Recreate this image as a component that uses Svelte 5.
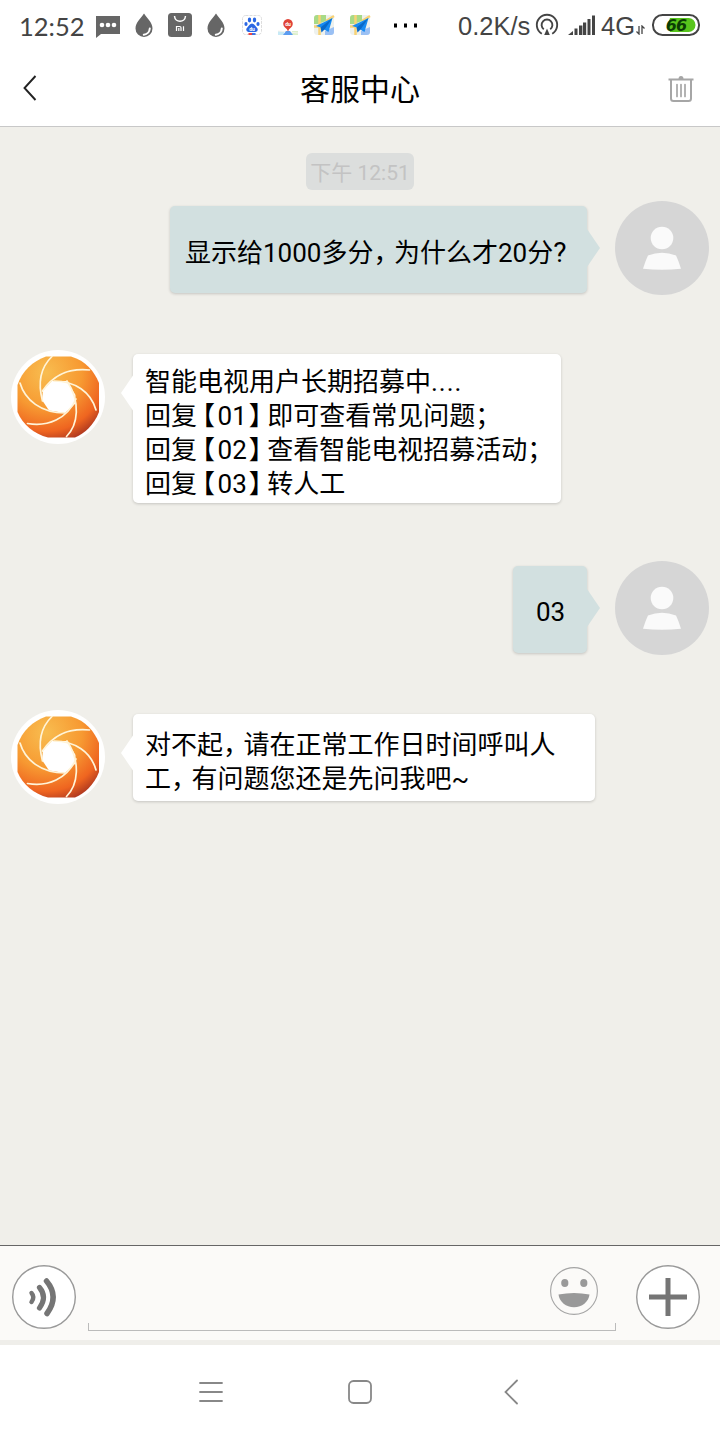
<script>
  const messages = [
    { from: 'me', kind: 'question', lines: ['显示给1000多分，为什么才20分?'] },
    {
      from: 'agent',
      kind: 'menu',
      lines: ['智能电视用户长期招募中....', '回复【01】即可查看常见问题；', '回复【02】查看智能电视招募活动；', '回复【03】转人工']
    },
    { from: 'me', kind: 'short', lines: ['03'] },
    { from: 'agent', kind: 'reply', lines: ['对不起，请在正常工作日时间呼叫人', '工，有问题您还是先问我吧~'] }
  ];
  const marks = { '，': 'comma', '；': 'semi', '【': 'open', '】': 'close', '?': 'ask', '....': 'dots' };
  const parts = (line) => line.split(/([，；【】?]|\.{4})/).filter(Boolean);
</script>

<div class="screen">
  <div class="status">
    <span class="clock">12:52</span>
    <div class="notices">
      <svg viewBox="0 0 36 36"><path d="M6 9h24v18H11l-5 4z" fill="#666" /><g fill="#fff"><circle cx="12" cy="18" r="2.3" /><circle cx="18" cy="18" r="2.3" /><circle cx="24" cy="18" r="2.3" /></g></svg>
      {@render drop()}
      <svg viewBox="0 0 36 36"><rect x="6" y="6" width="24" height="24" rx="3.5" fill="#666" /><path d="M12.5 9c.5 7 10.500 7 11 0" fill="none" stroke="#fff" stroke-width="1.500" /><path d="M14.500 24v-4.500h3.200q1.300 0 1.300 1.300V24M16.800 21v3M21.500 19.200V24" fill="none" stroke="#fff" stroke-width="1.200" /></svg>
      {@render drop()}
      <svg viewBox="0 0 36 36"><rect x="8.500" y="8.500" width="19" height="19" rx="3" fill="#fff" stroke="#ddd" stroke-dasharray="3 1" /><g fill="#2b67e4"><ellipse cx="15.500" cy="13" rx="1.700" ry="2.400" /><ellipse cx="20.500" cy="13" rx="1.700" ry="2.400" /><ellipse cx="12" cy="17" rx="1.600" ry="2" /><ellipse cx="24" cy="17" rx="1.600" ry="2" /><path d="M18 16.500q2 0 3.500 2.500l2 2.500q1 3-2 3.500h-7q-3-.500-2-3.500l2-2.500q1.500-2.500 3.500-2.500z" /></g><text x="18" y="23.800" class="mini">du</text><path d="M14.500 27h4" stroke="#e33" stroke-width="1.800" /><path d="M18 27h3.500" stroke="#2b67e4" stroke-width="1.800" /></svg>
      <svg viewBox="0 0 36 36"><path d="M8 24h6v4H8z" fill="#c7e9f6" /><path d="M22 24h6v4h-6z" fill="#dcf0cb" /><path d="M8 24l20 2" stroke="#f4f4ee" /><path d="M13 28l3-4h4l3 4z" fill="#5c9df0" /><path d="M18 24.500q-.600-2.500-3-4a4.800 4.800 0 1 1 6 0q-2.400 1.500-3 4z" fill="#e04337" /><text x="18" y="18.500" class="mini">du</text></svg>
      {@render mapIcon()}
      {@render mapIcon()}
    </div>
    <svg class="more" viewBox="0 0 28 36"><path d="M2 17.500h3v4H2zM12 17.500h3v4h-3zM22 17.500h3v4h-3z" fill="#000" /></svg>
    <span class="speed">0.2K/s</span>
    <svg class="hotspot" viewBox="0 0 24 24"><g fill="none" stroke="#444" stroke-width="1.900"><path d="M6.800 20.700a10.200 10.200 0 1 1 10.400 0" /><path d="M8.800 16.300a5.400 5.400 0 1 1 6.400 0" /></g><path d="M12 15.500l2.800 6.500H9.200z" fill="#444" /></svg>
    <svg class="signal" viewBox="0 0 28 20"><path d="M0 20l5-4v4zM6.500 13.500h3V20h-3zM11 10.500h3.400V20H11zM15 7.500h3.200V20H15zM19.500 4h3v16h-3zM24 .500h3V20h-3z" fill="#444" /></svg>
    <span class="net">4G</span>
    <svg class="arrows" viewBox="0 0 9 10"><path d="M3 1v8L.500 6.500M6 9V1l2.500 2.500" fill="none" stroke="#444" stroke-width="1.300" /></svg>
    <svg class="battery" viewBox="0 0 48 22"><rect x="1" y="1" width="46" height="20" rx="9.500" fill="#fff" stroke="#444" stroke-width="2" /><path d="M18 4h18.500a7 7 0 0 1 0 14H18q-3-7 0-14z" fill="#58c41c" /><text x="24" y="17.200" class="level">66</text></svg>
  </div>

  <header>
    <svg class="back" viewBox="0 0 14 26"><path d="M12.500 1L1.500 13l11 12" fill="none" stroke="#222" stroke-width="1.900" /></svg>
    <h1>客服中心</h1>
    <svg class="trash" viewBox="0 0 26 28"><g fill="none" stroke="#a6a6a6" stroke-width="2"><path d="M.500 4.500h25M3 5v18.500q0 2.500 2.500 2.500h15q2.500 0 2.500-2.500V5" /><path d="M9 9.500v12M13 9.500v12M17 9.500v12" stroke-linecap="round" stroke-width="1.700" /></g><path d="M10.500 4q0-3 2.500-3t2.500 3z" fill="#a6a6a6" /></svg>
  </header>

  <main>
    <time>下午 12:51</time>
    {#each messages as m}
      <div class="row {m.from} {m.kind}">
        {#if m.from === 'agent'}
          <svg class="avatar" viewBox="0 0 94 94">
            <defs>
              <radialGradient id="glow" cx=".35" cy=".2" r=".88"><stop offset="0" stop-color="#f8bd50" /><stop offset=".5" stop-color="#f79a32" /><stop offset=".82" stop-color="#ef6520" /><stop offset="1" stop-color="#ae3820" /></radialGradient>
            </defs>
            <circle cx="47" cy="47" r="47" fill="#fff" />
            <path d="M35 6.500h25C75 11 83 21 88 33v29C83 75 74 83 64 87.500H37C23 84 12 75 6.500 62V35C11 21 22 11 35 6.500z" fill="url(#glow)" />
            <path d="M41 31L56 31L64.500 45L64 54L54 63L38 60.500L31 50L32 40z" fill="#fff" />
            <g fill="none" stroke="#fff4d8" stroke-width="1.700" stroke-linecap="round">
              <path d="M41 6.500C29 18 27 34 31.500 51" />
              <path d="M78.500 20C58 18 43 24 31.500 41" />
              <path d="M85 60C80 42 64 31 43 31" />
              <path d="M55.500 86.500C67 75 70 52 56 31" />
              <path d="M16.500 73.500C37 77 56 69 65 49" />
              <path d="M9 33C14 50 30 63 54 63" />
            </g>
          </svg>
        {/if}
        <div class="bubble">
          {#each m.lines as line}
            <p>{#each parts(line) as part}{#if marks[part]}<span class="mark {marks[part]}">{part}</span>{:else}{part}{/if}{/each}</p>
          {/each}
          <svg class="tail" viewBox="0 0 13 38"><path d="M0 0L13 19L0 38z" /></svg>
        </div>
        {#if m.from === 'me'}
          <svg class="avatar" viewBox="0 0 94 94"><circle cx="47" cy="47" r="47" fill="#d6d6d6" /><circle cx="47" cy="37" r="11.300" fill="#fafafa" /><path d="M33 54.500q14-5.500 28 0q2.500 5 5 13.200q-19 2.200-38 0q2.500-8.200 5-13.200z" fill="#fafafa" /></svg>
        {/if}
      </div>
    {/each}
  </main>

  <footer>
    <svg class="round" viewBox="0 0 64 64"><circle cx="32" cy="32" r="31.300" fill="#fff" stroke="#999" stroke-width="1.400" /><g fill="none" stroke="#757575" stroke-linecap="round"><path d="M19.500 28q3.600 4 0 9" stroke-width="4.400" /><path d="M27.500 22.500q8 9.500 0 20.500" stroke-width="5.200" /><path d="M34.500 16q13 15.500 .500 32.500" stroke-width="5.500" /></g></svg>
    <div class="field">
      <svg class="smile" viewBox="0 0 48 48"><circle cx="24" cy="24" r="23.400" fill="none" stroke="#a5a5a5" stroke-width="1.100" /><g fill="#999"><ellipse cx="14.800" cy="16" rx="3.600" ry="4" /><ellipse cx="33.800" cy="16" rx="3.600" ry="4" /><path d="M8.500 27.500q15.500-3 31 0c-1 7.500-7.500 12.700-15.500 12.700S9.500 35 8.500 27.500z" /></g></svg>
    </div>
    <svg class="round" viewBox="0 0 64 64"><circle cx="32" cy="32" r="31.300" fill="#fff" stroke="#999" stroke-width="1.400" /><path d="M32 15.500v33M15.500 32h33" stroke="#757575" stroke-width="5" stroke-linecap="square" /></svg>
  </footer>
  <nav>
    <svg viewBox="0 0 28 28"><path d="M3 5h22M3 14h22M3 23h22" /></svg>
    <svg viewBox="0 0 28 28"><rect x="3" y="3" width="22" height="22" rx="4.500" /></svg>
    <svg viewBox="0 0 28 28"><path d="M22 2.500L10.500 14l11.500 11.500" /></svg>
  </nav>
</div>

{#snippet drop()}
  <svg viewBox="0 0 36 36"><path d="M18 6.500c3 4.500 8.500 9 8.500 15a8.500 8.500 0 0 1-17 0c0-6 5.500-10.500 8.500-15z" fill="#666" /><path d="M23.800 21.500q-.500 5.500-6 6.200" fill="none" stroke="#fff" stroke-width="2" stroke-linecap="round" /></svg>
{/snippet}

{#snippet mapIcon()}
  <svg viewBox="0 0 36 36"><rect x="8" y="8" width="20" height="20" rx="3.500" fill="#eef1ed" /><path d="M11 8h9v6l-8 3H8v-6q0-3 3-3z" fill="#a8da86" /><path d="M19 24l9-4v5q0 3-3 3h-6z" fill="#9ac0f4" /><path d="M13.500 8v20M8 19.500h9M20 14l8-5" stroke="#f8d275" stroke-width="2.500" /><path d="M26.500 11L10 19l5 1.500L22.500 25z" fill="#168bf2" /><path d="M26.500 11L14.500 20.500l1 5 3-3z" fill="#0869c8" /></svg>
{/snippet}

<style>
  :global(body) { margin: 0; }
  .screen {
    width: 720px;
    height: 1440px;
    display: flex;
    flex-direction: column;
    overflow: hidden;
    background: #fff;
    font-family: Roboto, "Noto Sans CJK SC", sans-serif;
  }
  svg { display: block; flex: none; }
  .status {
    height: 50px;
    display: flex;
    align-items: center;
    box-sizing: border-box;
    padding-left: 19px;
    color: #444;
  }
  .clock { width: 71px; font: 25.500px/50px Lato, sans-serif; margin-top: 1px; white-space: nowrap; }
  .notices { display: flex; }
  .notices svg { width: 36px; height: 36px; }
  .mini { font: bold 5px Roboto, sans-serif; fill: #fff; text-anchor: middle; }
  .more { width: 28px; height: 36px; margin: -2px 0 0 14px; }
  .speed, .net { font: 25.500px/50px "Liberation Sans", sans-serif; margin-top: 2px; white-space: nowrap; }
  .speed { width: 77px; margin-left: 38px; }
  .hotspot { width: 24px; height: 24px; }
  .signal { width: 28px; height: 20px; margin-left: 9px; margin-top: -1px; }
  .net { width: 33px; margin-left: 5px; }
  .arrows { width: 9px; height: 10px; margin: 10px 0 0 2px; }
  .battery { width: 48px; height: 22px; margin: 0 0 1px 7px; }
  .level { font: italic bold 17.500px "DejaVu Sans", sans-serif; font-size: 16px; letter-spacing: -1px; fill: #0b3d05; text-anchor: middle; }
  header {
    height: 77px;
    box-sizing: border-box;
    border-bottom: 1px solid #c8c8c8;
    display: flex;
    align-items: center;
    justify-content: space-between;
    padding: 0 26px 0 23px;
  }
  .back { width: 14px; height: 26px; }
  h1 { margin: 4px 0 0 15px; font-size: 30px; line-height: 44px; font-weight: 400; color: #000; }
  .trash { width: 26px; height: 28px; margin-top: 2px; }
  main {
    height: 1118px;
    box-sizing: border-box;
    background: #f0efea;
    padding: 26px 11px 0;
    display: flex;
    flex-direction: column;
    gap: 55px;
  }
  time {
    align-self: center;
    box-sizing: border-box;
    width: 108px;
    height: 37px;
    margin-bottom: -44px;
    border-radius: 6px;
    background: #dcdedd;
    color: #c3c3c3;
    font-size: 21px;
    line-height: 40px;
    text-align: center;
    white-space: nowrap;
  }
  .row { display: flex; align-items: flex-start; min-height: 94px; }
  .me, .agent { gap: 28px; }
  .me { justify-content: flex-end; }
  .menu { min-height: 156px; }
  .avatar { width: 94px; height: 94px; }
  .bubble {
    position: relative;
    box-sizing: border-box;
    border-radius: 5px;
    background: #fff;
    box-shadow: 0 1px 3px rgba(0, 0, 0, .18);
    font-size: 26px;
    line-height: 34px;
    color: #000;
  }
  .me .bubble { margin-top: 5px; height: 87px; padding: 29px 0 0 15px; background: #d2e0e0; }
  .question .bubble { width: 417px; padding-top: 30px; }
  .short .bubble { width: 74px; padding-left: 23px; }
  .agent .bubble { margin-top: 4px; padding: 11px 0 0 12px; }
  .menu .bubble { width: 428px; height: 149px; }
  .reply .bubble { width: 462px; height: 87px; padding-top: 14px; }
  p { margin: 0; height: 34px; white-space: nowrap; }
  .mark { display: inline-block; box-sizing: border-box; width: 20.500px; height: 34px; vertical-align: top; font-feature-settings: "halt"; }
  .open { padding-left: 5px; }
  .close { padding-left: 2px; }
  .ask { width: 14px; font-size: 28px; }
  .dots { width: auto; letter-spacing: 1px; }
  .tail { position: absolute; width: 13px; height: 38px; top: 23px; right: -13px; }
  .tail path { fill: #d2e0e0; }
  .agent .tail { right: auto; left: -12px; top: 20px; transform: scaleX(-1); }
  .agent .tail path { fill: #fff; }
  footer {
    height: 100px;
    box-sizing: border-box;
    border-top: 1px solid #666;
    border-bottom: 5px solid #efeeea;
    background: #fbfaf8;
    display: flex;
    padding: 19px 20px 0 12px;
  }
  .round { width: 64px; height: 64px; }
  .field {
    width: 528px;
    height: 66px;
    margin: 0 20px 0 12px;
    box-sizing: border-box;
    display: flex;
    justify-content: flex-end;
    padding: 2px 18px 0 0;
    background:
      linear-gradient(#bbb, #bbb) left bottom / 1px 8px no-repeat,
      linear-gradient(#bbb, #bbb) right bottom / 1px 8px no-repeat,
      linear-gradient(#bbb, #bbb) left bottom / 100% 1px no-repeat;
  }
  .smile { width: 48px; height: 48px; }
  nav {
    height: 94px;
    display: flex;
    justify-content: center;
    align-items: center;
    gap: 121px;
  }
  nav svg { width: 28px; height: 28px; fill: none; stroke: #888; stroke-width: 1.800; stroke-linecap: round; }
</style>
